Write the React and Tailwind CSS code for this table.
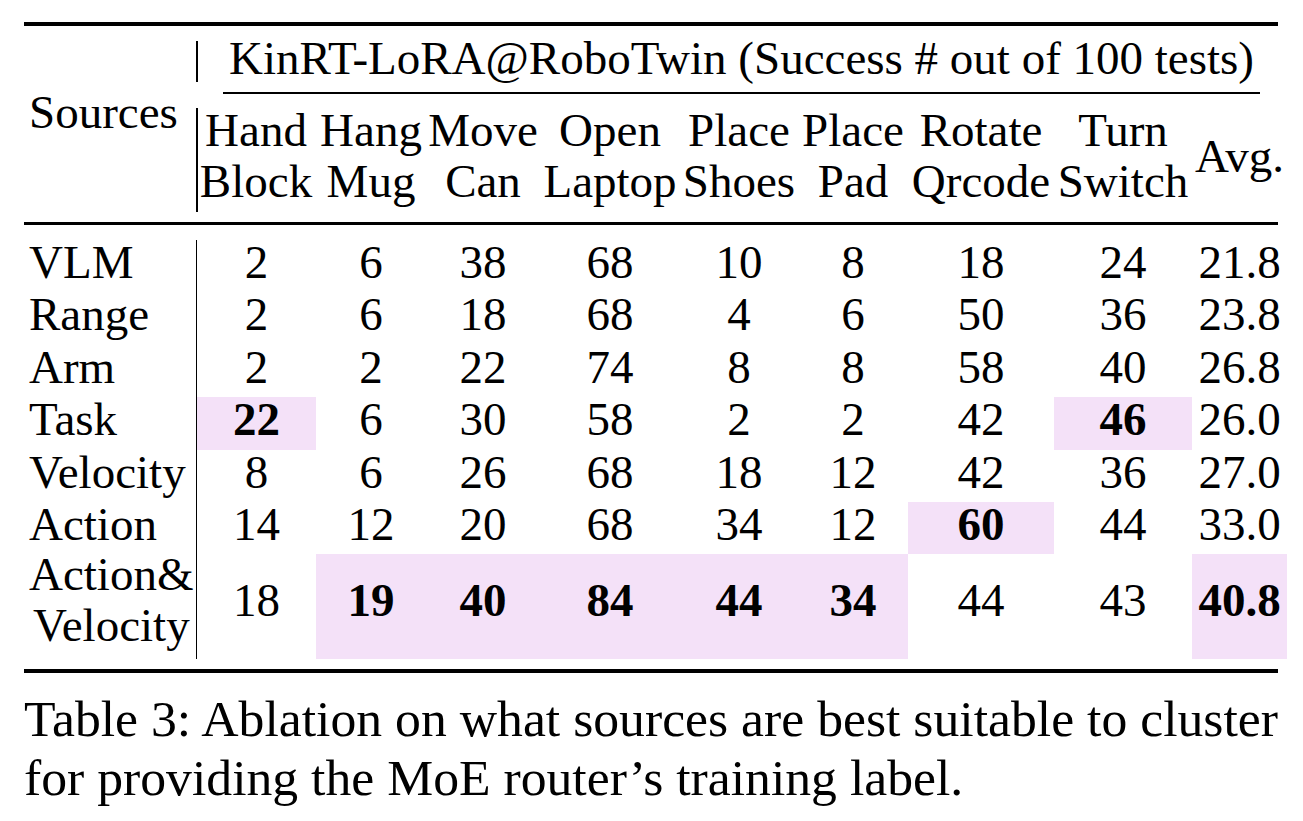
import React from 'react'

const cols = ['w-[120px]', 'w-[110px]', 'w-[114px]', 'w-[140px]', 'w-[118px]', 'w-[110px]', 'w-[146px]', 'w-[138px]', 'w-[95px]']

const heads = [
  ['Hand', 'Block'],
  ['Hang', 'Mug'],
  ['Move', 'Can'],
  ['Open', 'Laptop'],
  ['Place', 'Shoes'],
  ['Place', 'Pad'],
  ['Rotate', 'Qrcode'],
  ['Turn', 'Switch'],
]

// b = best result (bold + highlighted cell)
const rows = [
  { name: 'VLM', vals: ['2', '6', '38', '68', '10', '8', '18', '24', '21.8'], b: [] },
  { name: 'Range', vals: ['2', '6', '18', '68', '4', '6', '50', '36', '23.8'], b: [] },
  { name: 'Arm', vals: ['2', '2', '22', '74', '8', '8', '58', '40', '26.8'], b: [] },
  { name: 'Task', vals: ['22', '6', '30', '58', '2', '2', '42', '46', '26.0'], b: [0, 7] },
  { name: 'Velocity', vals: ['8', '6', '26', '68', '18', '12', '42', '36', '27.0'], b: [] },
  { name: 'Action', vals: ['14', '12', '20', '68', '34', '12', '60', '44', '33.0'], b: [6] },
]

const last = { vals: ['18', '19', '40', '84', '44', '34', '44', '43', '40.8'], b: [1, 2, 3, 4, 5, 8] }

const App = () => {
  return (
    <div className="w-[1303px] h-[821px] bg-white text-black pt-[22px] pl-[24px] font-['Liberation_Serif'] [font-family:Liberation_Serif,serif]">
      <div className="w-[1263px] text-[47px]">
        {/* top rule */}
        <div className="w-[1254px] h-[4px] bg-black" />

        {/* header */}
        <div className="flex h-[196px]">
          <div className="w-[172px] shrink-0 pl-[5px] pt-[64px] leading-[44px]">Sources</div>
          <div className="flex flex-col w-[1091px]">
            <div className="flex items-start h-[66px]">
              <div className="w-[1.5px] -mr-[1.5px] h-[41px] mt-[15px] bg-black shrink-0" />
              <div className="flex-1 text-center pt-[10px] leading-[44px] whitespace-nowrap">
                KinRT-LoRA@RoboTwin (Success # out of 100 tests)
              </div>
            </div>
            <div className="ml-[27px] w-[1037px] h-[1.5px] bg-black" />
            <div className="flex items-start flex-1">
              <div className="w-[1.5px] -mr-[1.5px] h-[104px] mt-[14.5px] bg-black shrink-0" />
              {heads.map((h, i) => (
                <div key={i} className={`${cols[i]} shrink-0 text-center pt-[11px] leading-[51px] whitespace-nowrap`}>
                  <div>{h[0]}</div>
                  <div>{h[1]}</div>
                </div>
              ))}
              <div className={`${cols[8]} shrink-0 text-center pt-[37px] leading-[51px]`}>Avg.</div>
            </div>
          </div>
        </div>

        {/* mid rule */}
        <div className="w-[1254px] h-[3px] bg-black" />

        {/* body */}
        <div className="pt-[15px]">
          {rows.map((r) => (
            <div key={r.name} className="flex h-[52.4px]">
              <div className="w-[172px] shrink-0 pl-[5px] leading-[44px]">{r.name}</div>
              {r.vals.map((v, i) => {
                const best = r.b.includes(i)
                return (
                  <div
                    key={i}
                    className={`${cols[i]} shrink-0 text-center leading-[44px] ${i === 0 ? 'border-l-[1.5px] border-black' : ''} ${best ? 'bg-[#f4e1f8] font-bold' : ''}`}
                  >
                    {v}
                  </div>
                )
              })}
            </div>
          ))}
          <div className="flex h-[104.6px]">
            <div className="w-[172px] shrink-0 pl-[5px] leading-[41px]">
              <div>Action&amp;</div>
              <div className="mt-[10px] pl-[4px]">Velocity</div>
            </div>
            {last.vals.map((v, i) => {
              const best = last.b.includes(i)
              return (
                <div
                  key={i}
                  className={`${cols[i]} shrink-0 text-center leading-[92px] ${i === 0 ? 'border-l-[1.5px] border-black' : ''} ${best ? 'bg-[#f4e1f8] font-bold' : ''}`}
                >
                  {v}
                </div>
              )
            })}
          </div>
        </div>

        {/* bottom rule */}
        <div className="w-[1254px] h-[4px] mt-[10px] bg-black" />
      </div>

      {/* caption */}
      <div className="w-[1254px] mt-[16px] text-[51.7px] leading-[59px]">
        <div className="text-justify [text-align-last:justify] [word-spacing:-1px] whitespace-nowrap">
          Table 3: Ablation on what sources are best suitable to cluster
        </div>
        <div>for providing the MoE router’s training label.</div>
      </div>
    </div>
  )
}

export default App
